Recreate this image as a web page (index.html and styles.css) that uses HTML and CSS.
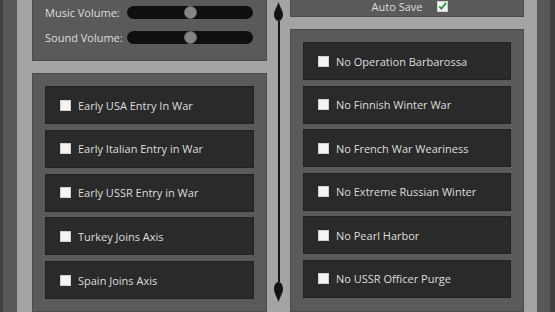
FILE: index.html
```html
<!DOCTYPE html>
<html lang="en">
<head>
  <meta charset="UTF-8" />
  <title>Game Options</title>
  <link rel="stylesheet" href="styles.css">
</head>
<body>

  <div class="shell">
    <div class="board">

      <div class="column">
        <div class="panel top-left">
          <div class="volume-row">
            <span class="label">Music Volume:</span>
            <div class="track"><span class="knob"></span></div>
          </div>
          <div class="volume-row">
            <span class="label">Sound Volume:</span>
            <div class="track"><span class="knob"></span></div>
          </div>
        </div>
        <div class="panel options left-options">
          <label class="option"><span class="box"></span>Early USA Entry In War</label>
          <label class="option"><span class="box"></span>Early Italian Entry in War</label>
          <label class="option"><span class="box"></span>Early USSR Entry in War</label>
          <label class="option"><span class="box"></span>Turkey Joins Axis</label>
          <label class="option"><span class="box"></span>Spain Joins Axis</label>
        </div>
      </div>

      <div class="divider">
        <svg class="drop" width="9" height="19" viewBox="0 0 9 19">
          <path d="M4.5 0 C6 5, 9 9, 9 12.5 C9 16, 7 19, 4.5 19 C2 19, 0 16, 0 12.5 C0 9, 3 5, 4.5 0Z" fill="#141414"/>
        </svg>
        <div class="rail"></div>
        <svg class="drop" width="9" height="20" viewBox="0 0 9 20">
          <path d="M4.5 20 C6 15, 9 11, 9 7 C9 3, 7 0, 4.5 0 C2 0, 0 3, 0 7 C0 11, 3 15, 4.5 20Z" fill="#141414"/>
        </svg>
      </div>

      <div class="column">
        <div class="panel top-right">
          <span class="label">Auto Save</span>
          <span class="box checked">
            <svg width="11" height="10" viewBox="0 0 11 10">
              <path d="M1.5 5.5 L4.2 8.3 L9.8 1.2" fill="none" stroke="#1f9a2e" stroke-width="2.2"/>
            </svg>
          </span>
        </div>
        <div class="panel options right-options">
          <label class="option"><span class="box"></span>No Operation Barbarossa</label>
          <label class="option"><span class="box"></span>No Finnish Winter War</label>
          <label class="option"><span class="box"></span>No French War Weariness</label>
          <label class="option"><span class="box"></span>No Extreme Russian Winter</label>
          <label class="option"><span class="box"></span>No Pearl Harbor</label>
          <label class="option"><span class="box"></span>No USSR Officer Purge</label>
        </div>
      </div>

    </div>
  </div>

</body>
</html>
```

FILE: styles.css
```css
* { margin: 0; padding: 0; box-sizing: border-box; }
html, body {
  height: 100%;
  overflow: hidden;
}
body {
  font-family: "Open Sans", "Liberation Sans", sans-serif;
  font-size: 11px;
  color: #dedede;
  background-color: #404040;
}
.shell {
  height: 312px;
  margin: 0 5px 0 3px;
  padding: 0 13px 0 14px;
  background-color: #585858;
}
.board {
  height: 100%;
  display: flex;
  padding: 0 13px 0 15px;
  background-color: #a4a4a4;
}
.column {
  display: flex;
  flex-direction: column;
}
.column:first-child {
  width: 235px;
  gap: 12px;
}
.column:last-child {
  width: 234px;
  gap: 12px;
}
.panel {
  background-color: #5a5a5a;
  border: 1px solid #4c4c4c;
}

/* volume sliders */
.top-left {
  height: 61px;
  border-top: none;
  padding: 0 13px 0 12px;
}
.volume-row {
  height: 25px;
  display: flex;
  align-items: center;
  gap: 6px;
}
.volume-row .label {
  width: 76px;
  white-space: nowrap;
}
.track {
  flex: 1;
  height: 13px;
  border-radius: 7px;
  background-color: #0f0f0f;
  display: flex;
  align-items: center;
  justify-content: center;
}
.knob {
  width: 13px;
  height: 13px;
  border-radius: 50%;
  background-color: #858585;
  border: 1px solid #6a6a6a;
  margin-left: 1px;
}

/* auto save */
.top-right {
  height: 17px;
  border-top: none;
  display: flex;
  justify-content: center;
  align-items: flex-start;
  gap: 15px;
  padding: 1px 0 0 6px;
  line-height: 11px;
}

/* option lists */
.options {
  flex: 1;
  display: flex;
  flex-direction: column;
  padding: 12px 12px 0 12px;
}
.left-options {
  gap: 5.8px;
}
.right-options {
  gap: 5.6px;
}
.option {
  height: 38px;
  flex-shrink: 0;
  display: flex;
  align-items: center;
  gap: 7px;
  padding-left: 14px;
  background-color: #2a2a2a;
  border: 1px solid #222;
  white-space: nowrap;
}
.box {
  width: 11px;
  height: 11px;
  background-color: #f4f4f4;
  border: 1px solid #cfcfcf;
  display: flex;
  align-items: center;
  justify-content: center;
}
.box.checked svg {
  margin-top: -1px;
}

/* middle scroll rail */
.divider {
  width: 23px;
  display: flex;
  flex-direction: column;
  align-items: center;
  padding: 2px 0 10px 0;
}
.drop {
  display: block;
  flex-shrink: 0;
}
.rail {
  flex: 1;
  width: 2px;
  background-color: #161616;
}
```
